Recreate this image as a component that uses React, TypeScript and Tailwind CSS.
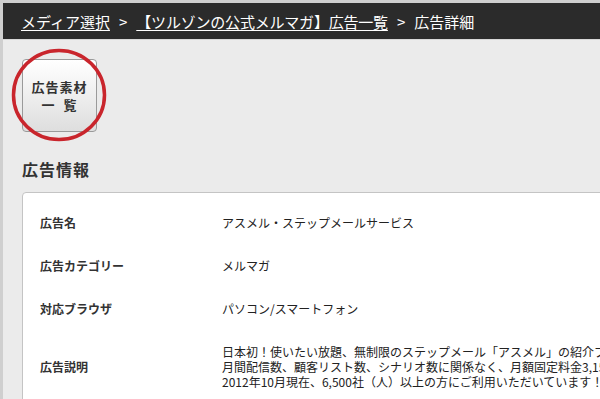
import React from 'react';

interface InfoRow {
  label: string;
  value: string[];
}

const rows: InfoRow[] = [
  { label: '広告名', value: ['アスメル・ステップメールサービス'] },
  { label: '広告カテゴリー', value: ['メルマガ'] },
  { label: '対応ブラウザ', value: ['パソコン/スマートフォン'] },
  {
    label: '広告説明',
    value: [
      '日本初！使いたい放題、無制限のステップメール「アスメル」の紹介プログラムです。',
      '月間配信数、顧客リスト数、シナリオ数に関係なく、月額固定料金3,150円で利用できます。',
      '2012年10月現在、6,500社（人）以上の方にご利用いただいています！',
    ],
  },
];

export default function App() {
  return (
    <div
      className="w-[600px] h-[399px] overflow-hidden bg-[#ebebeb] border-l-[3px] border-l-[#cfcfcf] text-[#222]"
      style={{ fontFamily: '"Noto Sans CJK JP", "Noto Sans", sans-serif' }}
    >
      {/* Breadcrumb bar */}
      <div className="border-t-[3px] border-t-[#cfcfcf] bg-[#2b2b2b] h-[40px] flex items-center pl-[18px] pt-[3px] text-white text-[15px] whitespace-nowrap border-b border-b-[#d8d8d8]">
        <a className="underline underline-offset-2">メディア選択</a>
        <span className="mx-[9px]">&gt;</span>
        <a className="underline underline-offset-2 tracking-[-0.2px]">【ツルゾンの公式メルマガ】広告一覧</a>
        <span className="mx-[9px]">&gt;</span>
        <span>広告詳細</span>
      </div>

      <div className="pl-[19px] pt-[19px]">
        {/* Material list button with red marker circle */}
        <div className="relative w-[75px] h-[73px]">
          <button className="w-[75px] h-[73px] rounded-[4px] border border-[#9a9a9a] bg-gradient-to-b from-white to-[#dedede] flex flex-col items-center justify-center text-[13px] font-bold leading-[18px] tracking-[1px] text-[#333]">
            <span>広告素材</span>
            <span>一&nbsp;&nbsp;覧</span>
          </button>
          <svg className="absolute left-[-11px] top-[-11px] pointer-events-none" width="96" height="94" viewBox="0 0 96 94">
            <ellipse cx="48" cy="47" rx="45.5" ry="44.5" fill="none" stroke="#c9252c" strokeWidth="3.5" />
          </svg>
        </div>

        <h2 className="mt-[26px] text-[16px] font-bold tracking-[1px] text-[#333] leading-[22px]">広告情報</h2>

        {/* Info card */}
        <div className="mt-[12px] w-[700px] bg-white border border-[#c4c4c4] rounded-tl-[4px] pt-[8px] pb-[40px] pl-[17px]">
          {rows.map((row, i) => (
            <div
              key={row.label}
              className={
                i === rows.length - 1
                  ? 'flex items-center pt-[14px] pb-[14px] text-[12px]'
                  : 'flex items-center h-[43px] text-[12px]'
              }
            >
              <div className="w-[182px] font-bold text-[#333]">{row.label}</div>
              <div className="leading-[15px] whitespace-nowrap text-[#222]">
                {row.value.map((line) => (
                  <div key={line}>{line}</div>
                ))}
              </div>
            </div>
          ))}
        </div>
      </div>
    </div>
  );
}
